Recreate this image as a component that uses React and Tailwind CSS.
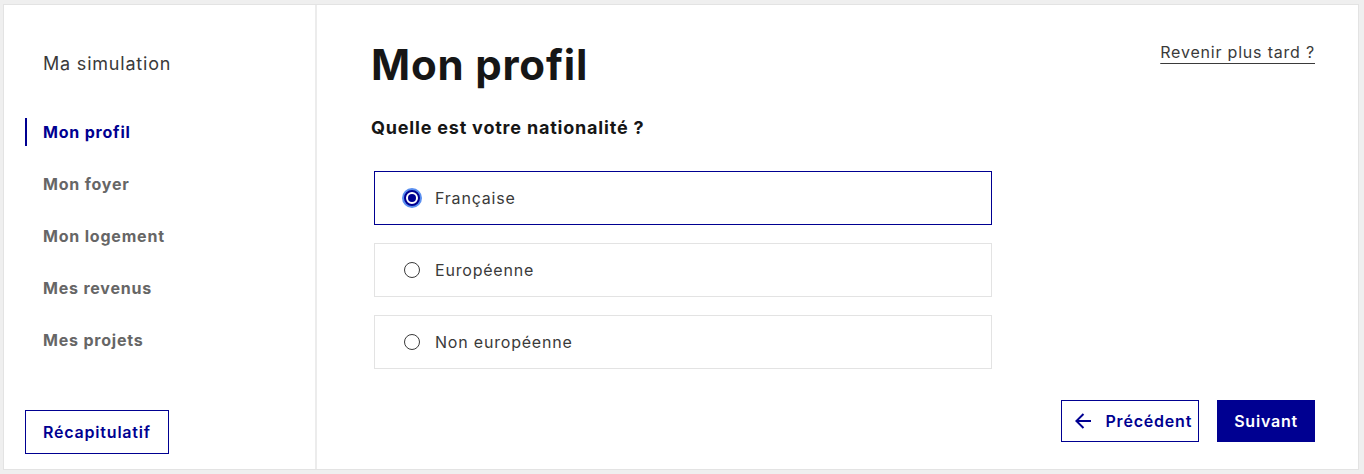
import React, { useState } from 'react'
import { RiArrowLeftLine } from 'react-icons/ri'

const font = { fontFamily: 'Inter, "Noto Sans", "Liberation Sans", sans-serif' }

const steps = ['Mon profil', 'Mon foyer', 'Mon logement', 'Mes revenus', 'Mes projets']
const options = ['Française', 'Européenne', 'Non européenne']

function Radio({ checked }) {
  if (checked) {
    return (
      <span className="flex h-[20px] w-[20px] items-center justify-center rounded-full bg-[#5a8ff0]">
        <span className="flex h-[16px] w-[16px] items-center justify-center rounded-full border-2 border-[#000091] bg-white">
          <span className="h-[8px] w-[8px] rounded-full bg-[#000091]"></span>
        </span>
      </span>
    )
  }
  return (
    <span className="flex h-[20px] w-[20px] items-center justify-center">
      <span className="h-[16px] w-[16px] rounded-full border border-[#3a3a3a] bg-white"></span>
    </span>
  )
}

function App() {
  const [choice, setChoice] = useState('Française')

  return (
    <div className="h-[474px] w-full bg-[#efefef] pl-[3px] pr-[5px] pt-[4px] pb-[4px] tracking-wider" style={font}>
      <div className="flex h-full border border-[#e3e3e3] bg-white">
        <aside className="flex w-[313px] flex-col justify-between border-r-2 border-[#ececec] pb-[15px] pt-[45px]">
          <div>
            <p className="pl-[39px] text-[18px] leading-[28px] text-[#3a3a3a]">Ma simulation</p>
            <nav className="mt-[40px] flex flex-col gap-[24px] pl-[21px]">
              {steps.map((step, i) => (
                <div
                  key={step}
                  className={
                    i === 0
                      ? 'border-l-2 border-[#000091] pl-[16px] text-[16px] font-bold leading-[28px] text-[#000091]'
                      : 'border-l-2 border-transparent pl-[16px] text-[16px] font-bold leading-[28px] text-[#666666]'
                  }
                >
                  {step}
                </div>
              ))}
            </nav>
          </div>
          <div className="pl-[21px]">
            <button className="h-[44px] border border-[#000091] px-[17px] text-[16px] font-semibold text-[#000091]">
              Récapitulatif
            </button>
          </div>
        </aside>

        <main className="flex flex-1 flex-col justify-between pb-[27px] pl-[54px] pr-[43px] pt-[34px]">
          <div>
            <div className="flex items-start justify-between">
              <h1 className="text-[42px] font-bold leading-[52px] text-[#161616]">Mon profil</h1>
              <a className="mt-[1px] text-[16px] leading-[24px] text-[#3a3a3a] underline underline-offset-[5px]">
                Revenir plus tard ?
              </a>
            </div>
            <h2 className="mt-[23px] text-[18px] font-bold leading-[28px] text-[#161616]">
              Quelle est votre nationalité ?
            </h2>
            <div className="mt-[29px] flex w-[621px] flex-col gap-[18px] pl-[3px]">
              {options.map((opt) => (
                <label
                  key={opt}
                  onClick={() => setChoice(opt)}
                  className={
                    choice === opt
                      ? 'flex h-[54px] cursor-pointer items-center gap-[13px] border border-[#000091] pl-[27px] text-[16px] text-[#3a3a3a]'
                      : 'flex h-[54px] cursor-pointer items-center gap-[13px] border border-[#e3e3e3] pl-[27px] text-[16px] text-[#3a3a3a]'
                  }
                >
                  <Radio checked={choice === opt} />
                  {opt}
                </label>
              ))}
            </div>
          </div>
          <div className="flex justify-end gap-[18px]">
            <button className="flex h-[42px] items-center gap-[10px] border border-[#000091] pl-[9px] pr-[6px] text-[16px] font-semibold text-[#000091]">
              <RiArrowLeftLine size={24} />
              Précédent
            </button>
            <button className="h-[42px] bg-[#000091] px-[17px] text-[16px] font-semibold text-white">
              Suivant
            </button>
          </div>
        </main>
      </div>
    </div>
  )
}

export default App
